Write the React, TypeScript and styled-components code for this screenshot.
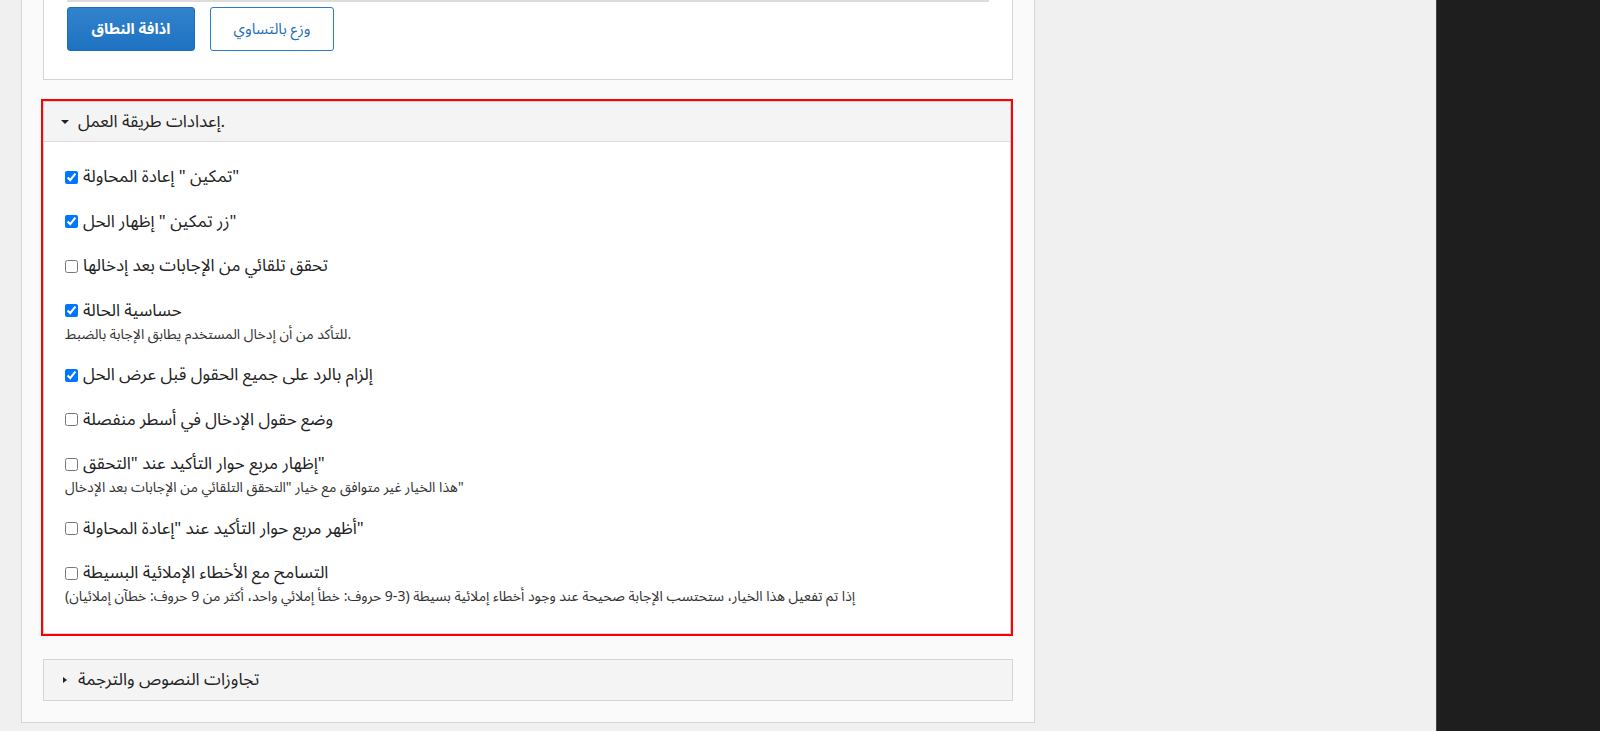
import styled, { createGlobalStyle } from "styled-components";

const GlobalStyle = createGlobalStyle`
	* {
		box-sizing: border-box;
	}
	body {
		margin: 0;
		background: #f0f0f0;
		font-family: "Noto Sans Arabic", "Noto Sans", "DejaVu Sans", sans-serif;
		color: #222;
	}
`;

type Option = {
	label: string;
	checked: boolean;
	desc?: string;
};

const options: Option[] = [
	{ label: 'تمكين " إعادة المحاولة"', checked: true },
	{ label: 'زر تمكين " إظهار الحل"', checked: true },
	{ label: "تحقق تلقائي من الإجابات بعد إدخالها", checked: false },
	{
		label: "حساسية الحالة",
		checked: true,
		desc: "للتأكد من أن إدخال المستخدم يطابق الإجابة بالضبط.",
	},
	{ label: "إلزام بالرد على جميع الحقول قبل عرض الحل", checked: true },
	{ label: "وضع حقول الإدخال في أسطر منفصلة", checked: false },
	{
		label: 'إظهار مربع حوار التأكيد عند "التحقق"',
		checked: false,
		desc: 'هذا الخيار غير متوافق مع خيار "التحقق التلقائي من الإجابات بعد الإدخال"',
	},
	{ label: 'أظهر مربع حوار التأكيد عند "إعادة المحاولة"', checked: false },
	{
		label: "التسامح مع الأخطاء الإملائية البسيطة",
		checked: false,
		desc: "إذا تم تفعيل هذا الخيار، ستحتسب الإجابة صحيحة عند وجود أخطاء إملائية بسيطة (3-9 حروف: خطأ إملائي واحد، أكثر من 9 حروف: خطآن إملائيان)",
	},
];

export default function App() {
	return (
		<>
			<GlobalStyle />
			<PageStyled>
				<MainStyled>
					<ContainerStyled>
						<TopPanelStyled>
							<RuleStyled />
							<ButtonRowStyled>
								<ButtonStyled $primary>اذافة النطاق</ButtonStyled>
								<ButtonStyled>وزع بالتساوي</ButtonStyled>
							</ButtonRowStyled>
						</TopPanelStyled>

						<SectionStyled $highlight>
							<SectionHeaderStyled>
								<CaretStyled $open />
								<span>إعدادات طريقة العمل.</span>
							</SectionHeaderStyled>
							<SectionBodyStyled>
								{options.map((o) => (
									<ItemStyled key={o.label}>
										<RowStyled>
											<CheckboxStyled type='checkbox' defaultChecked={o.checked} />
											<span>{o.label}</span>
										</RowStyled>
										{o.desc && <DescStyled>{o.desc}</DescStyled>}
									</ItemStyled>
								))}
							</SectionBodyStyled>
						</SectionStyled>

						<SectionStyled>
							<SectionHeaderStyled $collapsed>
								<CaretStyled />
								<span>تجاوزات النصوص والترجمة</span>
							</SectionHeaderStyled>
						</SectionStyled>
					</ContainerStyled>
				</MainStyled>
				<SidebarStyled />
			</PageStyled>
		</>
	);
}

const PageStyled = styled.div`
	display: flex;
	align-items: flex-start;
	min-height: 100vh;
`;

const MainStyled = styled.main`
	flex: 1;
	padding-left: 21px;
`;

const ContainerStyled = styled.div`
	width: 1014px;
	background: #fafafa;
	border: 1px solid #d6d6d6;
	border-top: none;
	padding: 0 21px 21px;
`;

const TopPanelStyled = styled.div`
	background: #fff;
	border: 1px solid #d4d4d4;
	border-top: none;
	padding: 0 23px 28px;
`;

const RuleStyled = styled.div`
	height: 2px;
	background: #dcdcdc;
`;

const ButtonRowStyled = styled.div`
	display: flex;
	gap: 15px;
	margin-top: 5px;
`;

const ButtonStyled = styled.button<{ $primary?: boolean }>`
	height: 44px;
	width: ${(p) => (p.$primary ? "128px" : "124px")};
	border-radius: 3px;
	font-family: inherit;
	font-size: 15px;
	font-weight: ${(p) => (p.$primary ? 700 : 400)};
	cursor: pointer;
	border: 1px solid ${(p) => (p.$primary ? "#1f6db5" : "#2b7bc6")};
	color: ${(p) => (p.$primary ? "#fff" : "#1f6fb8")};
	background: ${(p) => (p.$primary ? "linear-gradient(#3183cd, #1f72c1)" : "#fff")};
`;

const SectionStyled = styled.section<{ $highlight?: boolean }>`
	margin-top: ${(p) => (p.$highlight ? "21px" : "25px")};
	margin-right: ${(p) => (p.$highlight ? "2px" : "0")};
	border: 1px solid #d4d4d4;
	outline: ${(p) => (p.$highlight ? "2px solid #ff0000" : "none")};
	background: #fff;
`;

const SectionHeaderStyled = styled.div<{ $collapsed?: boolean }>`
	display: flex;
	align-items: center;
	gap: 9px;
	height: 40px;
	padding-left: 17px;
	background: #f4f4f4;
	border-bottom: ${(p) => (p.$collapsed ? "none" : "1px solid #dcdcdc")};
	font-size: 17px;
	color: #222;
`;

const CaretStyled = styled.i<{ $open?: boolean }>`
	display: inline-block;
	width: 0;
	height: 0;
	${(p) =>
		p.$open
			? `border-left: 4px solid transparent;
		border-right: 4px solid transparent;
		border-top: 4px solid #222;`
			: `border-top: 3.5px solid transparent;
		border-bottom: 3.5px solid transparent;
		border-left: 4px solid #222;
		margin: 0 2px;`}
`;

const SectionBodyStyled = styled.div`
	display: flex;
	flex-direction: column;
	gap: 20.5px;
	padding: 23px 22px 28px 21px;
`;

const ItemStyled = styled.div`
	display: flex;
	flex-direction: column;
`;

const RowStyled = styled.label`
	display: flex;
	align-items: center;
	gap: 5px;
	height: 24px;
	font-size: 17px;
	color: #222;
`;

const CheckboxStyled = styled.input`
	margin: 0;
	width: 13px;
	height: 13px;
`;

const DescStyled = styled.div`
	margin: 2px 0 -2px;
	font-size: 14px;
	line-height: 20px;
	color: #333;
`;

const SidebarStyled = styled.aside`
	width: 164px;
	height: 100vh;
	background: #1e1e1e;
	border-left: 1px solid #454545;
	flex-shrink: 0;
`;
